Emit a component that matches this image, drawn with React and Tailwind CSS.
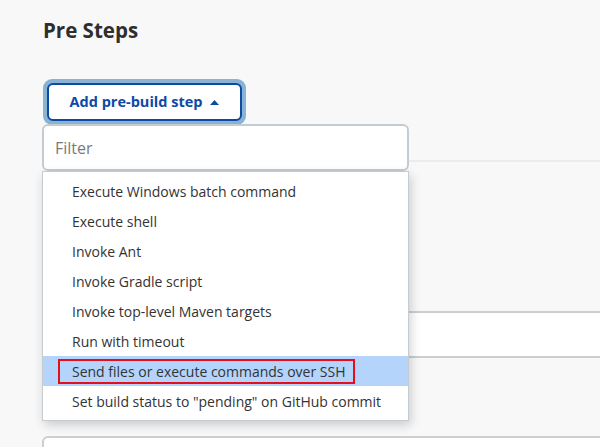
import { useState } from "react";

const steps = [
  "Execute Windows batch command",
  "Execute shell",
  "Invoke Ant",
  "Invoke Gradle script",
  "Invoke top-level Maven targets",
  "Run with timeout",
  "Send files or execute commands over SSH",
  'Set build status to "pending" on GitHub commit',
];

const App = () => {
  const [selected] = useState(6);

  return (
    <div
      className="h-[447px] w-[600px] overflow-hidden bg-[#f8f8f8] flex text-[#333]"
      style={{ fontFamily: '"Open Sans", "Noto Sans", sans-serif' }}
    >
      <div className="ml-[2px] w-px bg-[#d3d9dd]" />

      <div className="flex-1 pl-[40px] pt-[16px]">
        <h2 className="text-[20.5px] leading-[28px] font-bold text-[#2e2e2e] pl-px">
          Pre Steps
        </h2>

        <div className="relative mt-[35px]">
          <div className="ml-px inline-block rounded-[9px] p-[4px] bg-[#88b3d3]">
            <button className="h-[38px] w-[195px] rounded-[6px] border-2 border-[#0d4aa6] bg-white flex items-center justify-center gap-[8px] text-[14.5px] font-bold text-[#0d4aa6]">
              Add pre-build step
              <svg width="9" height="5" viewBox="0 0 9 5">
                <path d="M0 5 L4.5 0 L9 5 Z" fill="#0d4aa6" />
              </svg>
            </button>
          </div>

          {/* popup: filter + menu */}
          <div className="absolute left-0 top-[45px] z-10 w-[367px]">
            <div className="h-[47px] rounded-[6px] border-2 border-[#c4ccd1] bg-white flex items-center px-[11px]">
              <span className="text-[16px] text-[#7a7a7a]">Filter</span>
            </div>
            <div className="border border-[#c4ccd1] bg-white py-[4px] shadow-[2px_4px_10px_rgba(0,0,0,0.18)]">
              {steps.map((step, i) => (
                <div
                  key={step}
                  className={
                    "relative h-[30px] flex items-center pl-[29px] text-[14px] text-[#333] " +
                    (i === selected ? "bg-[#b4d4fc]" : "")
                  }
                >
                  {step}
                  {i === selected && (
                    <div className="absolute left-[15px] top-[3px] h-[25px] w-[297px] border-2 border-[#e3101b]" />
                  )}
                </div>
              ))}
            </div>
          </div>
        </div>

        <div className="mt-[35px] h-[2px] bg-[#ececec]" />

        <div className="mt-[149px] h-[47px] w-[620px] rounded-[6px] border-2 border-[#c9cfd3] bg-white" />

        <div className="mt-[78px] h-[47px] w-[620px] rounded-[6px] border-2 border-[#c9cfd3] bg-white" />
      </div>
    </div>
  );
};

export default App;
